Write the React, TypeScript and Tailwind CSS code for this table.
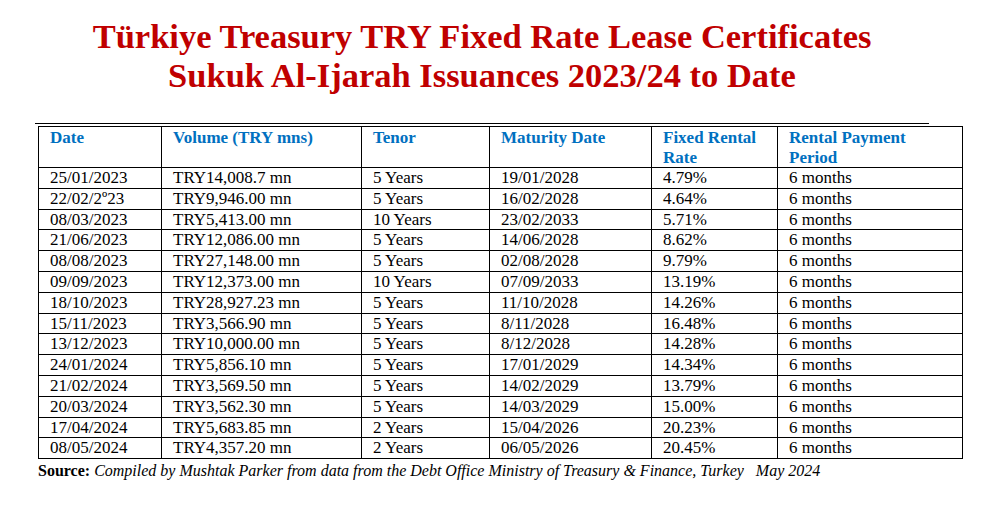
const rows: [string, string, string, string, string, string][] = [
  ['25/01/2023', 'TRY14,008.7 mn', '5 Years', '19/01/2028', '4.79%', '6 months'],
  ['22/02/2º23', 'TRY9,946.00 mn', '5 Years', '16/02/2028', '4.64%', '6 months'],
  ['08/03/2023', 'TRY5,413.00 mn', '10 Years', '23/02/2033', '5.71%', '6 months'],
  ['21/06/2023', 'TRY12,086.00 mn', '5 Years', '14/06/2028', '8.62%', '6 months'],
  ['08/08/2023', 'TRY27,148.00 mn', '5 Years', '02/08/2028', '9.79%', '6 months'],
  ['09/09/2023', 'TRY12,373.00 mn', '10 Years', '07/09/2033', '13.19%', '6 months'],
  ['18/10/2023', 'TRY28,927.23 mn', '5 Years', '11/10/2028', '14.26%', '6 months'],
  ['15/11/2023', 'TRY3,566.90 mn', '5 Years', '8/11/2028', '16.48%', '6 months'],
  ['13/12/2023', 'TRY10,000.00 mn', '5 Years', '8/12/2028', '14.28%', '6 months'],
  ['24/01/2024', 'TRY5,856.10 mn', '5 Years', '17/01/2029', '14.34%', '6 months'],
  ['21/02/2024', 'TRY3,569.50 mn', '5 Years', '14/02/2029', '13.79%', '6 months'],
  ['20/03/2024', 'TRY3,562.30 mn', '5 Years', '14/03/2029', '15.00%', '6 months'],
  ['17/04/2024', 'TRY5,683.85 mn', '2 Years', '15/04/2026', '20.23%', '6 months'],
  ['08/05/2024', 'TRY4,357.20 mn', '2 Years', '06/05/2026', '20.45%', '6 months'],
];

const headers = ['Date', 'Volume (TRY mns)', 'Tenor', 'Maturity Date', 'Fixed Rental Rate', 'Rental Payment Period'];
const widths = ['w-[123px]', 'w-[200px]', 'w-[128px]', 'w-[162px]', 'w-[126px]', 'w-[185px]'];

export default function App() {
  return (
    <div className="w-[1002px] h-[516px] bg-white text-black font-['Liberation_Serif',serif]">
      {/* Title */}
      <div className="w-[964px] pt-[17px] text-center text-[34.5px] leading-[39px] font-bold text-[#c00000]">
        <div>Türkiye Treasury TRY Fixed Rate Lease Certificates</div>
        <div>Sukuk Al-Ijarah Issuances 2023/24 to Date</div>
      </div>

      <div className="ml-[35px] mt-[28px] w-[894px] border-t border-black" />

      <div className="ml-[38px] mt-[2px]">
        <table className="border-collapse table-fixed w-[925px] text-[17px]">
          <thead>
            <tr>
              {headers.map((h, i) => (
                <th
                  key={h}
                  className={`${widths[i]} border border-black align-top text-left font-bold text-[#0070c0] leading-[19.5px] pl-[11px] pr-1 pt-[1px] pb-0 h-[41px]`}
                >
                  {h}
                </th>
              ))}
            </tr>
          </thead>
          <tbody>
            {rows.map((r, ri) => (
              <tr key={ri}>
                {r.map((c, ci) => (
                  <td key={ci} className="border border-black leading-[19.8px] pl-[11px] py-0 whitespace-nowrap">
                    {c}
                  </td>
                ))}
              </tr>
            ))}
          </tbody>
        </table>
      </div>

      <div className="ml-[38px] mt-[2px] text-[16px] leading-[20px] whitespace-pre">
        <span className="font-bold">Source:</span>{' '}
        <span className="italic">Compiled by Mushtak Parker from data from the Debt Office Ministry of Treasury &amp; Finance, Turkey   May 2024</span>
      </div>
    </div>
  );
}
